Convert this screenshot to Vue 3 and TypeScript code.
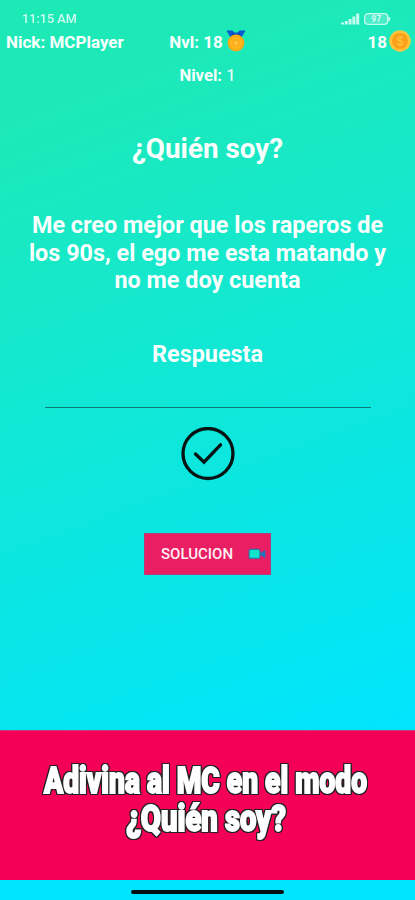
<script setup lang="ts">
interface BannerLine {
  text: string
  x: number
  y: number
  width: number
}

const player = { nick: 'MCPlayer', rank: 18, coins: 18, level: 1 }

const clueLines: string[] = [
  'Me creo mejor que los raperos de',
  'los 90s, el ego me esta matando y',
  'no me doy cuenta',
]

const bannerLines: BannerLine[] = [
  { text: 'Adivina al MC en el modo', x: 44, y: 61.5, width: 323 },
  { text: '¿Quién soy?', x: 126, y: 99.5, width: 160 },
]
</script>

<template>
  <div class="screen">
    <div class="status">
      <span class="clock">11:15 AM</span>
      <svg class="signals" width="50" height="14" viewBox="0 0 50 14">
        <g fill="#fff" fill-opacity="0.75">
          <rect x="0" y="10.5" width="3" height="2" />
          <rect x="3.8" y="9" width="3" height="3.5" />
          <rect x="7.6" y="7" width="3" height="5.5" />
          <rect x="11.4" y="4.5" width="3" height="8" />
          <rect x="15.2" y="1.5" width="3" height="11" />
        </g>
        <rect x="23.7" y="1.7" width="23" height="10.6" rx="3.2" fill="#fff" fill-opacity="0.2" stroke="#fff" stroke-opacity="0.75" stroke-width="1.3" />
        <path d="M48.3 5v4" stroke="#fff" stroke-opacity="0.75" stroke-width="1.6" />
        <text class="charge" x="35.2" y="10" text-anchor="middle">97</text>
      </svg>
    </div>

    <header class="stats">
      <span class="nick">Nick: {{ player.nick }}</span>
      <span class="rank">
        Nvl: {{ player.rank }}
        <svg width="20" height="22" viewBox="0 0 20 22">
          <path d="M0.5 0.5h6l2 2h3l2-2h6l-4 7H4.5z" fill="#0b5ad0" />
          <path d="M6 2.500l4 3 4-3v4H6z" fill="#0a45a8" />
          <circle cx="10" cy="13" r="8.4" fill="#fba915" />
          <circle cx="10" cy="13" r="6.3" fill="#fdb51c" />
          <circle cx="10" cy="13" r="2.9" fill="#ffc53a" stroke="#fca51a" stroke-width="1.2" />
        </svg>
      </span>
      <span class="coins">
        {{ player.coins }}
        <svg width="22" height="22" viewBox="0 0 22 22">
          <circle cx="11" cy="11" r="10.7" fill="#ffc43a" />
          <circle cx="11" cy="11" r="8" fill="#fb9f19" />
          <path d="M13.800 8.300c-.5-1-1.500-1.400-2.800-1.400-1.600 0-2.700.7-2.700 1.900 0 2.900 5.600 1.300 5.600 4.300 0 1.300-1.200 2-2.900 2-1.500 0-2.600-.6-3-1.600M11 5.300v11.400" fill="none" stroke="#ffc43a" stroke-width="1.2" />
        </svg>
      </span>
    </header>

    <p class="level"><b>Nivel:</b> {{ player.level }}</p>

    <main class="game">
      <h1 class="title">¿Quién soy?</h1>
      <p class="clue">
        <span v-for="line in clueLines" :key="line">{{ line }}</span>
      </p>
      <label class="answer">Respuesta</label>
      <div class="field"></div>
      <svg class="check" width="54" height="54" viewBox="0 0 54 54" fill="none" stroke="#061514">
        <circle cx="27" cy="26.5" r="25" stroke-width="3.3" />
        <path d="M14.500 27l8.500 8.200L39.500 17.800" stroke-width="3.4" stroke-linecap="round" stroke-linejoin="miter" />
      </svg>
      <button class="solution" type="button">
        <span>SOLUCION</span>
        <svg width="18" height="12" viewBox="0 0 18 12">
          <path d="M12 4.800h1.500L17.300 1.800v8.800L13.500 7.400H12z" fill="#1c74bd" />
          <rect x="1.1" y="1.4" width="10.8" height="9" rx="2" fill="#10e4cb" stroke="#2878a8" stroke-width="1.1" />
        </svg>
      </button>
    </main>

    <section class="banner">
      <svg width="415" height="149" viewBox="0 0 415 149">
        <text
          v-for="line in bannerLines"
          :key="line.text"
          :x="line.x"
          :y="line.y"
          :textLength="line.width"
          lengthAdjust="spacingAndGlyphs"
        >{{ line.text }}</text>
      </svg>
    </section>
    <footer class="nav"><span class="handle"></span></footer>
  </div>
</template>

<style>
body {
  margin: 0;
}
</style>

<style scoped>
.screen {
  display: flex;
  flex-direction: column;
  width: 415px;
  height: 900px;
  overflow: hidden;
  font-family: Roboto, sans-serif;
  color: #fafffe;
  background: linear-gradient(160deg, #1de9b6 0%, #1de9b8 12%, #00e5ff 85%);
}
.status {
  display: flex;
  justify-content: space-between;
  align-items: center;
  height: 27px;
  padding: 11px 24px 0 22px;
  box-sizing: border-box;
}
.clock {
  font-size: 12.7px;
  line-height: 16px;
  font-weight: 500;
  opacity: 0.8;
}
.charge {
  font-size: 8.5px;
  font-weight: 700;
  fill: #fff;
  fill-opacity: 0.8;
}
.stats {
  display: grid;
  grid-template-columns: 1fr auto 1fr;
  align-items: center;
  height: 30px;
  padding: 0 5px 0 6px;
  font-size: 17px;
  font-weight: 700;
}
.rank,
.coins {
  display: flex;
  align-items: center;
  gap: 3px;
}
.rank {
  margin-left: -1px;
}
.rank svg {
  margin-top: -3px;
}
.coins {
  justify-content: flex-end;
}
.coins svg {
  margin: -3px -1px 0 -1px;
}
.level {
  margin: 8px 0 0;
  font-size: 16.7px;
  line-height: 21px;
  text-align: center;
}
.game {
  display: flex;
  flex-direction: column;
  align-items: center;
  height: 644px;
}
.title {
  margin: 46px 0 0;
  font-size: 27.8px;
  line-height: 34px;
  font-weight: 700;
}
.clue {
  display: flex;
  flex-direction: column;
  align-items: center;
  margin: 46px 0 0;
  font-size: 23.4px;
  line-height: 27.5px;
  font-weight: 700;
  white-space: nowrap;
}
.answer {
  margin-top: 45px;
  font-size: 23.4px;
  line-height: 28px;
  font-weight: 700;
}
.field {
  width: 326px;
  height: 1px;
  margin-top: 39px;
  background: #087a76;
}
.check {
  margin-top: 19px;
}
.solution {
  display: flex;
  align-items: center;
  justify-content: space-between;
  width: 127px;
  height: 42px;
  margin-top: 52px;
  padding: 0 4px 0 16px;
  border: 1px solid #b83a78;
  background: #e91e63;
  color: #fff0f5;
  font: 500 15px Roboto, sans-serif;
}
.solution svg {
  flex: none;
}
.banner {
  height: 150px;
  flex: none;
  box-sizing: border-box;
  border-top: 1px solid #c23d78;
  background: #f50057;
}
.banner svg {
  display: block;
}
.banner text {
  font-family: Roboto, sans-serif;
  font-size: 36px;
  font-weight: 900;
  fill: #fff;
  stroke: #fff;
  stroke-width: 1.8px;
  filter: drop-shadow(1px 0 0 #222) drop-shadow(-1px 0 0 #222) drop-shadow(0 1px 0 #222) drop-shadow(0 -1px 0 #222);
}
.nav {
  display: flex;
  justify-content: center;
  align-items: flex-start;
  flex: 1;
  background: #00e5ff;
}
.handle {
  width: 153px;
  height: 4px;
  margin-top: 10px;
  border-radius: 2px;
  background: #061012;
}
</style>
